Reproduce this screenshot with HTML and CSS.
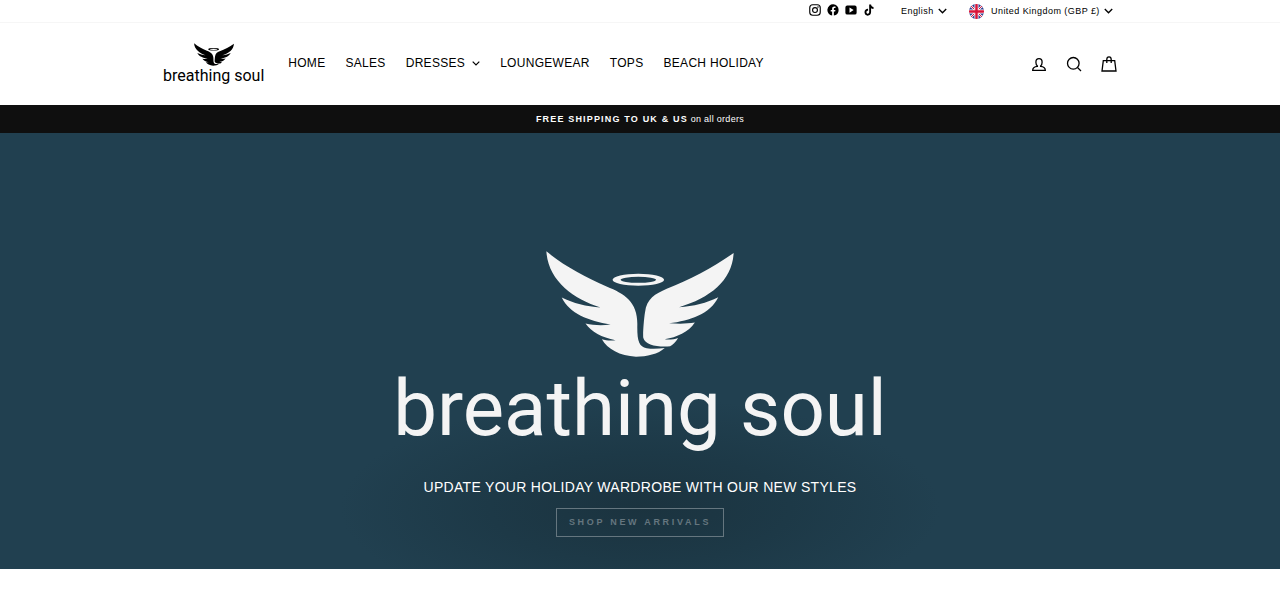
FILE: index.html
```html
<!DOCTYPE html>
<html lang="en">
<head>
    <meta charset="UTF-8">
    <meta name="viewport" content="width=device-width, initial-scale=1.0">
    <title>Breathing Soul</title>
    <link rel="stylesheet" href="styles.css">
</head>
<body>
    <!-- shared shapes -->
    <svg class="sprite" aria-hidden="true">
        <symbol id="wings" viewBox="49 32 562 317">
            <path d="M50 33 C100 75 170 112 230 138 C285 160 322 185 322 250 C321 300 326 318 350 323 C370 326 388 324 404 322 C385 340 350 348 318 348 C270 346 232 325 216 296 C228 300 242 301 257 299 C215 290 185 275 167 249 C190 254 215 255 242 252 C175 240 120 220 96 171 C130 188 170 198 212 201 C130 175 55 120 50 33Z"/>
            <path d="M610 38 C606 120 540 172 447 200 C490 197 530 187 564 170 C540 220 480 240 417 248 C445 250 470 250 494 246 C475 275 440 290 404 296 C418 298 432 296 444 292 C436 305 428 312 420 317 C380 320 345 312 340 292 C338 285 341 240 345 215 C350 175 375 160 410 145 C480 118 550 80 610 38Z"/>
            <path fill-rule="evenodd" d="M248 118a77 18 0 1 0 154 0a77 18 0 1 0 -154 0Z M272 118a53 9 0 1 0 106 0a53 9 0 1 0 -106 0Z"/>
        </symbol>
        <symbol id="chevron" viewBox="0 0 8 5">
            <path d="M.7.7 4 4 7.3.7" fill="none" stroke="currentColor" stroke-width="1.2"/>
        </symbol>
    </svg>

    <div class="toolbar">
        <div class="page-width toolbar-inner">
            <ul class="social">
                <li><a href="#" aria-label="Instagram">
                    <svg viewBox="0 0 32 32" width="12" height="12"><g fill="none" stroke="currentColor" stroke-width="3"><rect x="2" y="2" width="28" height="28" rx="8"/><circle cx="16" cy="16" r="6.5"/></g><circle cx="24" cy="8" r="2"/></svg>
                </a></li>
                <li><a href="#" aria-label="Facebook">
                    <svg viewBox="0 0 32 32" width="12" height="12"><path d="M31 16a15 15 0 1 0-17.3 14.8V20.3H9.9V16h3.8v-3.3c0-3.8 2.2-5.9 5.7-5.9 1.6 0 3.3.3 3.3.3v3.7h-1.9c-1.9 0-2.5 1.2-2.5 2.4V16h4.2l-.7 4.3h-3.5v10.5A15 15 0 0 0 31 16z"/></svg>
                </a></li>
                <li><a href="#" aria-label="YouTube">
                    <svg viewBox="0 0 32 32" width="12" height="12"><path fill-rule="evenodd" d="M6 4h20a5 5 0 0 1 5 5v14a5 5 0 0 1-5 5H6a5 5 0 0 1-5-5V9a5 5 0 0 1 5-5z M12 9v14l11-7z"/></svg>
                </a></li>
                <li><a href="#" aria-label="TikTok">
                    <svg viewBox="0 0 32 32" width="12" height="12"><path d="M16.5 1h5c.4 4 2.9 6.6 6.5 7v5c-2.5 0-4.7-.8-6.5-2v10.5C21.5 27.5 17.5 31 12.5 31S4 27 4 22s4-9.2 9.5-9v5.2c-2.5-.4-4.4 1.3-4.4 3.7s1.6 4 3.7 4 3.7-1.6 3.7-4.4z"/></svg>
                </a></li>
            </ul>
            <div class="picker">
                <select aria-label="Language">
                    <option>English</option>
                </select>
                <svg class="chevron" width="9" height="6"><use href="#chevron"/></svg>
            </div>
            <div class="picker">
                <svg class="flag" viewBox="0 0 30 30" width="15" height="15">
                    <clipPath id="round"><circle cx="15" cy="15" r="15"/></clipPath>
                    <g clip-path="url(#round)">
                        <path fill="#32408f" d="M0 0h30v30H0z"/>
                        <path stroke="#fff" stroke-width="4" d="M0 0l30 30M30 0 0 30"/>
                        <path stroke="#d8143a" stroke-width="2" d="M0 0l30 30M30 0 0 30"/>
                        <path stroke="#fff" stroke-width="8" d="M15 0v30M0 15h30"/>
                        <path stroke="#d8143a" stroke-width="5" d="M15 0v30M0 15h30"/>
                    </g>
                </svg>
                <select aria-label="Currency">
                    <option>United Kingdom (GBP £)</option>
                </select>
                <svg class="chevron" width="9" height="6"><use href="#chevron"/></svg>
            </div>
        </div>
    </div>

    <header class="site-header">
        <div class="page-width header-inner">
            <a href="#" class="logo">
                <svg class="logo-wings"><use href="#wings"/></svg>
                <span class="logo-name">breathing soul</span>
            </a>
            <nav class="site-nav">
                <a href="#">HOME</a>
                <a href="#">SALES</a>
                <a href="#">DRESSES <svg class="chevron" width="8" height="5"><use href="#chevron"/></svg></a>
                <a href="#">LOUNGEWEAR</a>
                <a href="#">TOPS</a>
                <a href="#">BEACH HOLIDAY</a>
            </nav>
            <div class="header-icons">
                <a href="#" aria-label="Log in">
                    <svg viewBox="0 0 16 16" width="16" height="16"><path d="M6.4 9.9C5.3 9 4.9 7.9 4.9 6.2 4.9 4 6.2 2.700 8 2.700s3.100 1.300 3.100 3.500c0 1.700-.4 2.800-1.500 3.700v.5c3 .3 4.700 1.100 4.700 3.900H1.700c0-2.800 1.700-3.600 4.700-3.900z"/></svg>
                </a>
                <a href="#" aria-label="Search">
                    <svg viewBox="0 0 16 16" width="16" height="16"><circle cx="7.3" cy="7.3" r="5.8"/><path d="M11.5 11.5 15 15"/></svg>
                </a>
                <a href="#" aria-label="Cart">
                    <svg viewBox="0 0 16 16" width="16" height="16"><path d="M2.3 4.7h11.4L15 15H1zM5.8 7V3.500C5.800 1.800 6.500.8 8 .8s2.200 1 2.200 2.700V7"/></svg>
                </a>
            </div>
        </div>
    </header>

    <div class="announcement">
        <strong>FREE SHIPPING TO UK &amp; US</strong>
        <span>on all orders</span>
    </div>

    <main>
        <section class="hero">
            <svg class="hero-wings"><use href="#wings"/></svg>
            <div class="hero-name">breathing soul</div>
            <div class="hero-text">
                <h1>UPDATE YOUR HOLIDAY WARDROBE WITH OUR NEW STYLES</h1>
                <a href="#" class="btn">SHOP NEW ARRIVALS</a>
            </div>
        </section>
    </main>
</body>
</html>
```
FILE: styles.css
```css
* {
    box-sizing: border-box;
}
body {
    margin: 0;
    background: #fff;
    color: #000;
    font-family: "Liberation Sans", Arial, sans-serif;
    font-size: 12px;
    letter-spacing: 0.025em;
}
a {
    color: inherit;
    text-decoration: none;
}
svg {
    display: block;
    fill: currentColor;
    flex-shrink: 0;
}
.sprite {
    position: absolute;
    width: 0;
    height: 0;
}
.page-width {
    max-width: 954px;
    margin: 0 auto;
}

/* toolbar */
.toolbar {
    border-bottom: 1px solid #f6f6f6;
}
.toolbar-inner {
    display: flex;
    justify-content: flex-end;
    align-items: center;
    gap: 22px;
    height: 22px;
    padding-right: 4px;
}
.social {
    display: flex;
    gap: 6px;
    margin: 0 4px 2px 0;
    padding: 0;
    list-style: none;
}
.picker {
    display: flex;
    align-items: center;
}
.picker select {
    appearance: none;
    margin: 0;
    padding: 0;
    border: 0;
    background: none;
    color: inherit;
    font-family: inherit;
    font-size: 9px;
    letter-spacing: 0.05em;
    line-height: 16px;
    cursor: pointer;
}
.picker .chevron {
    margin-left: 4px;
}
.flag {
    margin-right: 7px;
}

/* header */
.header-inner {
    display: flex;
    align-items: center;
    height: 82px;
}
.logo {
    display: flex;
    flex-direction: column;
    align-items: center;
    margin-right: 24px;
}
.logo-wings {
    width: 40px;
    height: 23px;
}
.logo-name {
    font-family: Roboto, sans-serif;
    font-size: 16px;
    line-height: 20px;
    letter-spacing: 0;
}
.site-nav {
    display: flex;
    gap: 20px;
    padding-bottom: 2px;
}
.site-nav a {
    display: flex;
    align-items: center;
    gap: 7px;
}
.header-icons {
    display: flex;
    gap: 19px;
    margin-left: auto;
}
.header-icons svg {
    fill: none;
    stroke: currentColor;
    stroke-width: 1.3;
}

/* announcement bar */
.announcement {
    padding: 7px 16px;
    background: #0f0f0f;
    color: #fff;
    font-size: 9px;
    line-height: 14px;
    text-align: center;
}
.announcement strong {
    letter-spacing: 0.13em;
}

/* hero */
.hero {
    display: flex;
    flex-direction: column;
    align-items: center;
    padding: 118px 20px 32px;
    background: radial-gradient(300px 110px at 50% 86%, #1b333f, #1d3947 50%, #214050) #214050;
    color: #f4f4f4;
}
.hero-wings {
    width: 188px;
    height: 106px;
}
.hero-name {
    font-family: Roboto, sans-serif;
    font-size: 78px;
    line-height: 104px;
    letter-spacing: 0;
}
.hero-text {
    margin-top: 16px;
    text-align: center;
}
.hero-text h1 {
    margin: 0 0 11px;
    color: #fff;
    font-size: 14px;
    font-weight: normal;
    line-height: 20px;
}
.btn {
    display: block;
    width: fit-content;
    margin: 0 auto;
    padding: 0 12px;
    border: 1px solid #65767f;
    color: #65767f;
    font-size: 9px;
    font-weight: bold;
    line-height: 27px;
    letter-spacing: 0.3em;
}
```
